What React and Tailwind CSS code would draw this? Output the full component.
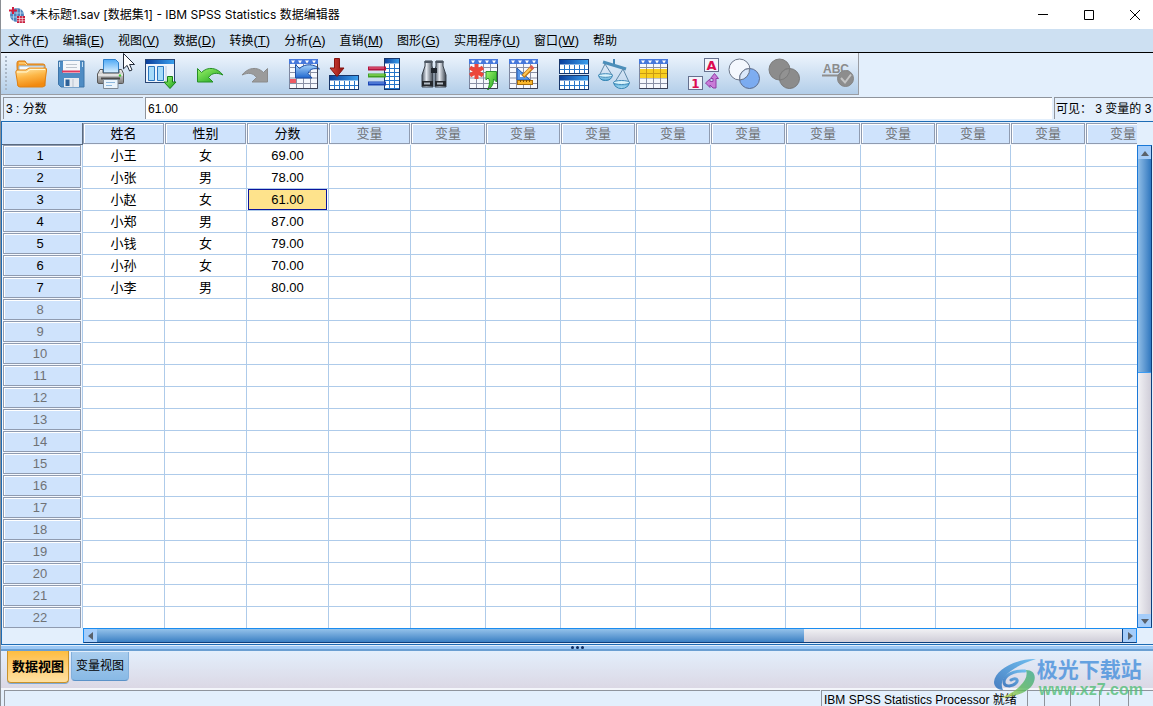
import { useState } from 'react'

const menus = [
  ['文件', 'F'],
  ['编辑', 'E'],
  ['视图', 'V'],
  ['数据', 'D'],
  ['转换', 'T'],
  ['分析', 'A'],
  ['直销', 'M'],
  ['图形', 'G'],
  ['实用程序', 'U'],
  ['窗口', 'W'],
  ['帮助', ''],
]

const records = [
  ['小王', '女', '69.00'],
  ['小张', '男', '78.00'],
  ['小赵', '女', '61.00'],
  ['小郑', '男', '87.00'],
  ['小钱', '女', '79.00'],
  ['小孙', '女', '70.00'],
  ['小李', '男', '80.00'],
]

const columns = ['姓名', '性别', '分数', ...Array(11).fill('变量')]
const rowNumbers = Array.from({ length: 22 }, (_, i) => i)

function Svg({ children }) {
  return (
    <svg viewBox="0 0 32 32" className="h-8 w-8" aria-hidden="true">
      {children}
    </svg>
  )
}

// white sheet with a blue header strip, base of several icons
function Sheet({ children }) {
  return (
    <Svg>
      <rect x="1.5" y="1.5" width="28" height="29" fill="#f6f8fd" stroke="#7c86a0" />
      <path d="M1.5 9.5h28M1.5 14.5h28M1.5 20h28M1.5 25.5h28M8.5 6v24M15.5 6v24M22.5 6v24" stroke="#8a90a5" fill="none" />
      <rect x="1" y="1" width="29" height="5" fill="#4678dc" />
      <path d="M3 2.5h4l-2 3zM10 2.5h4l-2 3zM17 2.5h4l-2 3zM24 2.5h4l-2 3z" fill="#fff" />
      {children}
      <path d="M29.5 6v24.5h-28" fill="none" stroke="#3a4055" />
    </Svg>
  )
}

function SmallTable({ x, y, w, h, head }) {
  const lines = []
  for (let i = x + 5; i < x + w - 2; i += 5) lines.push(`M${i + 0.5} ${y + head}V${y + h}`)
  for (let j = y + head + 4; j < y + h - 1; j += 4) lines.push(`M${x} ${j + 0.5}H${x + w}`)
  return (
    <g>
      <rect x={x + 0.5} y={y + 0.5} width={w - 1} height={h - 1} fill="#fff" />
      <path d={lines.join('')} stroke="#2675c9" fill="none" />
      <rect x={x + 0.5} y={y + 0.5} width={w - 1} height={head - 1} fill="url(#headBlue)" />
      <rect x={x + 0.5} y={y + 0.5} width={w - 1} height={h - 1} fill="none" stroke="#17366a" />
    </g>
  )
}

function Gradients() {
  return (
    <svg width="0" height="0" className="absolute" aria-hidden="true">
      <defs>
        <linearGradient id="folder" x1="0" y1="0" x2="0.3" y2="1">
          <stop offset="0" stopColor="#fff0b8" />
          <stop offset="0.5" stopColor="#fdb849" />
          <stop offset="1" stopColor="#f28a10" />
        </linearGradient>
        <linearGradient id="headBlue" x1="0" y1="0" x2="1" y2="0">
          <stop offset="0" stopColor="#0a3f9c" />
          <stop offset="1" stopColor="#3ba0ee" />
        </linearGradient>
        <linearGradient id="metal" x1="0" y1="0" x2="1" y2="0">
          <stop offset="0" stopColor="#4c5663" />
          <stop offset="0.4" stopColor="#e6ebf2" />
          <stop offset="1" stopColor="#3b444f" />
        </linearGradient>
        <linearGradient id="body" x1="0" y1="0" x2="0" y2="1">
          <stop offset="0" stopColor="#f2f2f2" />
          <stop offset="1" stopColor="#7d7d7d" />
        </linearGradient>
        <linearGradient id="paper" x1="0" y1="0" x2="0" y2="1">
          <stop offset="0" stopColor="#4fa9f5" />
          <stop offset="1" stopColor="#dff2ff" />
        </linearGradient>
        <linearGradient id="green" x1="0" y1="0" x2="1" y2="1">
          <stop offset="0" stopColor="#9df46b" />
          <stop offset="1" stopColor="#18a01c" />
        </linearGradient>
        <linearGradient id="blueArrow" x1="0" y1="0" x2="0" y2="1">
          <stop offset="0" stopColor="#a8d4fb" />
          <stop offset="1" stopColor="#1f67cf" />
        </linearGradient>
        <linearGradient id="red" x1="0" y1="0" x2="1" y2="0">
          <stop offset="0" stopColor="#d9463c" />
          <stop offset="1" stopColor="#8c100e" />
        </linearGradient>
        <linearGradient id="pan" x1="0" y1="0" x2="0" y2="1">
          <stop offset="0" stopColor="#d8f1fb" />
          <stop offset="0.5" stopColor="#2d93cc" />
          <stop offset="1" stopColor="#b7e4f7" />
        </linearGradient>
        <linearGradient id="swirlBlue" x1="0" y1="1" x2="1" y2="0">
          <stop offset="0" stopColor="#2468b8" />
          <stop offset="1" stopColor="#55b4ee" />
        </linearGradient>
        <linearGradient id="swirlGreen" x1="0" y1="1" x2="1" y2="0">
          <stop offset="0" stopColor="#d5dc45" />
          <stop offset="0.5" stopColor="#58b85f" />
          <stop offset="1" stopColor="#3dab8c" />
        </linearGradient>
      </defs>
    </svg>
  )
}

const OpenIcon = () => (
  <Svg>
    <path d="M2 8V5q0-2 2-2h6l2 3h16q2 0 2 2v20H3z" fill="#f7a233" stroke="#d87a12" />
    <path d="M4 8h25v5H4z" fill="#f4faff" stroke="#8fb7dd" />
    <path d="M4 5h6l2 2" fill="none" stroke="#ffe7a0" />
    <path d="M.8 14q0-2 2-2H11l3-2h16q2 0 1.6 2L29.5 27q-.3 2-2 2H5q-2 0-2.200-2z" fill="url(#folder)" stroke="#e08214" />
    <path d="M2 14h10l3-2.500h15" fill="none" stroke="#fff7d2" />
  </Svg>
)

const SaveIcon = () => (
  <Svg>
    <path d="M3.500 3h25.500v26H6l-2.500-2.500z" fill="#4e8cc4" stroke="#3d74a8" />
    <path d="M8 3h17v12H8z" fill="#f5f7fa" />
    <path d="M11 6.500h11M11 9.500h11" stroke="#bcc4ce" />
    <path d="M7 13.500h18" stroke="#df3a60" strokeWidth="2" />
    <path d="M9 20h15v9H9z" fill="#e6eaf0" />
    <path d="M10.500 21.500h4V28h-4z" fill="#2f6298" />
    <path d="M18 21v8" stroke="#b9c2cf" />
    <path d="M4.500 4v5M27.500 4v5" stroke="#c7e0f5" />
  </Svg>
)

const PrintIcon = () => (
  <Svg>
    <path d="M8.500 1.500h12l3 3V15h-15z" fill="url(#paper)" stroke="#2c7fc9" />
    <path d="M5 11.500h3V15h16v-3.500h2.500l2 4v9q0 1-1 1H4q-1.500 0-1.500-1.500v-8z" fill="url(#body)" stroke="#595959" />
    <path d="M3 17h25" stroke="#fff" />
    <path d="M6 20.500h19" stroke="#4b4b4b" strokeWidth="2" />
    <circle cx="25" cy="17.500" r="1.200" fill="#41cc32" />
    <path d="M8.500 21.500h14.500v9H8.500z" fill="#eaf4fc" stroke="#7f8a96" />
    <path d="M11 24.500h9M11 27.500h6" stroke="#8db7dd" />
  </Svg>
)

const RecallIcon = () => (
  <Svg>
    <rect x=".5" y="1.500" width="29" height="23" fill="#eef4fc" stroke="#284574" />
    <rect x="1" y="2" width="28" height="4" fill="url(#headBlue)" />
    <path d="M3.500 8.500h6v14h-6zM12.500 8.500h6v14h-6z" fill="#a6dcfa" stroke="#2b77c0" />
    <path d="M21 8v15" stroke="#b8c8df" />
    <path d="M22.500 18.500h5V24h3.500l-6 6.500-6-6.500h3.500z" fill="url(#green)" stroke="#178018" />
  </Svg>
)

const UndoIcon = () => (
  <Svg>
    <path d="M2.500 10.500l4 4C13 8 22 9.500 28 17c-6-2.500-11-2.500-14.500 2.500l4.500 4.500H2.500z" fill="url(#green)" stroke="#268f26" />
  </Svg>
)

const RedoIcon = () => (
  <Svg>
    <path d="M29.500 10.500l-4 4C19 8 10 9.500 4 17c6-2.500 11-2.500 14.500 2.500L14 24h15.500z" fill="#9b9b9b" stroke="#8b8b8b" />
  </Svg>
)

const GotoCaseIcon = () => (
  <Sheet>
    <rect x="2" y="21" width="6" height="4" fill="#ee5a63" />
    <path d="M7.500 6.500l4 4C17 5 27 6 31.500 11c-7-1-9.500 0-11.500 4.500l4 4.500H7.500z" fill="url(#blueArrow)" stroke="#1d4fa5" />
  </Sheet>
)

const GotoVariableIcon = () => (
  <Svg>
    <SmallTable x={1} y={17} w={30} h={15} head={6} />
    <path d="M6.500.5h5V10h4.500l-7 8.500L2 10h4.500z" fill="url(#red)" stroke="#851411" />
  </Svg>
)

const VariablesIcon = () => (
  <Svg>
    <SmallTable x={16} y={0} w={16} h={32} head={6} />
    <path d="M0 10.500h18" stroke="#b0143c" strokeWidth="4" />
    <path d="M1 10h15" stroke="#f2708c" />
    <path d="M0 17.500h18" stroke="#3f9e22" strokeWidth="4" />
    <path d="M1 17h15" stroke="#a5ef73" />
    <path d="M0 25.500h18" stroke="#1b46b4" strokeWidth="4" />
    <path d="M1 25h15" stroke="#7ca6f5" />
  </Svg>
)

const FindIcon = () => (
  <Svg>
    <path d="M7 3h7v5l1 4v17H4V17l3-9z" fill="url(#metal)" stroke="#3a424c" />
    <path d="M18 3h7v5l3 9v12H17V12l1-4z" fill="url(#metal)" stroke="#3a424c" />
    <path d="M6.500 4h8M17.500 4h8" stroke="#4d5662" strokeWidth="2" />
    <rect x="13" y="10" width="6" height="5" fill="#20262e" />
    <path d="M4 23h11v5H4zM17 23h11v5H17z" fill="#23272c" />
    <path d="M6 25.500h6M19 25.500h6" stroke="#b3bbc4" strokeWidth="2" />
  </Svg>
)

const InsertCaseIcon = () => (
  <Sheet>
    <path d="M8.500 6v15M2 9.500l13 8M15 9.500l-13 8" stroke="#ec463c" strokeWidth="4" />
    <path d="M18 13.500h10.500V24l-3-3c0 5-1.500 8.500-6 11 2-4 2.500-8 1.500-11l-1-1-2 2z" fill="url(#green)" stroke="#2a962a" />
  </Sheet>
)

const InsertVariableIcon = () => (
  <Sheet>
    <path d="M9 10v12h13z" fill="#5696e8" stroke="#1e5bb5" />
    <path d="M12 16v3h3.500z" fill="#fff" />
    <path d="M15 18.500L24.500 9" stroke="#c27912" strokeWidth="4" />
    <path d="M15.500 17.500L23.500 9.500" stroke="#ffc95a" strokeWidth="2" />
    <path d="M22.500 10.500L25 8.500" stroke="#df5d52" strokeWidth="4" />
    <rect x="9.500" y="22.500" width="15" height="4" fill="#f9b62c" stroke="#a66a0a" />
    <path d="M12.500 22v2M15.500 22v2M18.500 22v2M21.500 22v2" stroke="#794b00" />
  </Sheet>
)

const SplitIcon = () => (
  <Svg>
    <SmallTable x={1} y={1} w={30} h={15} head={6} />
    <SmallTable x={1} y={17} w={30} h={15} head={6} />
  </Svg>
)

const WeightIcon = () => (
  <Svg>
    <path d="M16 1v6" stroke="#4186b5" strokeWidth="2" />
    <path d="M5 4l23 7" stroke="#4d8fba" strokeWidth="3" />
    <path d="M7 6L1.500 17M7 6l7 11M25 11l-8 13M25 11l6 13" stroke="#5e88a8" fill="none" />
    <path d="M.5 17h14q-1 5.500-7 5.500T.5 17zM15.500 24.500h16q-1.500 6-8 6t-8-6z" fill="url(#pan)" stroke="#2d80b0" />
    <ellipse cx="7.500" cy="17.500" rx="7" ry="1.800" fill="#d9f3fc" stroke="#418bb8" />
    <ellipse cx="23.500" cy="24.500" rx="8" ry="2" fill="#d9f3fc" stroke="#418bb8" />
  </Svg>
)

const SelectIcon = () => (
  <Sheet>
    <path d="M2 11h27v9H2z" fill="#f8cf21" />
    <path d="M8.500 11v9M15.500 11v9M22.500 11v9M2 15.500h27" stroke="#c99a14" />
  </Sheet>
)

const LabelsIcon = () => (
  <Svg>
    <rect x="16.500" y=".5" width="14" height="13" fill="#f2f4fb" stroke="#65708e" />
    <text x="23.500" y="11.500" textAnchor="middle" fontSize="13" fontWeight="bold" fontFamily="DejaVu Sans" fill="#dc0a50">A</text>
    <rect x=".5" y="18.500" width="14" height="13" fill="#f2f4fb" stroke="#65708e" />
    <text x="7.500" y="29.500" textAnchor="middle" fontSize="12" fontWeight="bold" fontFamily="DejaVu Sans" fill="#dc0a50">1</text>
    <path d="M26.500 15.500l4 5H28V30h-3l-3-3v2.500L17.500 25l4.500-4v2.500h3V20.500h-2.500z" fill="#c97bd8" stroke="#8f3fa5" />
  </Svg>
)

const SetsIcon = () => (
  <Svg>
    <circle cx="11.500" cy="11.500" r="10.500" fill="#f4f8fe" stroke="#6d7789" />
    <circle cx="21.500" cy="20.500" r="10" fill="#6fa3f0" fillOpacity=".85" stroke="#5b6b8c" />
    <path d="M21.500 10.500A10 10 0 0 0 11.700 22 10.500 10.500 0 0 0 21.500 10.500z" fill="#dae8fb" stroke="#6d7789" />
  </Svg>
)

const AllVariablesIcon = () => (
  <Svg>
    <circle cx="11.500" cy="11.500" r="10.500" fill="#8c8c8c" stroke="#7c7c7c" />
    <circle cx="21.500" cy="20.500" r="10" fill="#8c8c8c" stroke="#777" />
    <path d="M21.500 10.500A10 10 0 0 0 11.700 22 10.500 10.500 0 0 0 21.500 10.500z" fill="#929292" stroke="#7b7b7b" />
  </Svg>
)

const SpellIcon = () => (
  <Svg>
    <text x="14" y="15" textAnchor="middle" fontSize="12" fontWeight="bold" fontFamily="Liberation Sans" fill="#8b8b8b">ABC</text>
    <path d="M0 17.500h20" stroke="#8f8f8f" strokeWidth="2" />
    <circle cx="23.500" cy="20.500" r="8" fill="#8d8d8d" stroke="#858585" />
    <path d="M19 20l4 4.500 6-8" fill="none" stroke="#c4c4c4" strokeWidth="2" />
  </Svg>
)

const toolGroups = [
  [['打开', OpenIcon], ['保存', SaveIcon], ['打印', PrintIcon]],
  [['重新调用对话框', RecallIcon]],
  [['撤消', UndoIcon], ['重做', RedoIcon]],
  [['转到个案', GotoCaseIcon], ['转到变量', GotoVariableIcon], ['变量', VariablesIcon]],
  [['查找', FindIcon]],
  [['插入个案', InsertCaseIcon], ['插入变量', InsertVariableIcon]],
  [['拆分文件', SplitIcon], ['加权个案', WeightIcon], ['选择个案', SelectIcon]],
  [['值标签', LabelsIcon], ['使用变量集', SetsIcon], ['显示所有变量', AllVariablesIcon]],
  [['拼写检查', SpellIcon]],
]

function AppIcon() {
  return (
    <svg viewBox="0 0 16 16" className="h-4 w-4" aria-hidden="true">
      <circle cx="8" cy="8" r="7" fill="#4e83bd" />
      <path d="M1.500 6h13M1.500 10h13M8 1v14M4.500 2v12M11.500 2v12" stroke="#c7dff3" strokeWidth=".7" fill="none" />
      <path d="M4 0v7M0 3.500h8" stroke="#d31d3d" strokeWidth="2" />
      <path d="M8 9h8v7H8z" fill="#c81d3c" />
      <path d="M8 11.500h8M8 13.800h8M10.600 9v7M13.300 9v7" stroke="#fff" strokeWidth=".6" />
    </svg>
  )
}

function TitleBar() {
  return (
    <header className="flex h-[29px] shrink-0 items-center bg-white pl-2">
      <AppIcon />
      <h1 className="ml-[5px] flex-1 truncate font-[Inter,'Noto_Sans_CJK_SC',sans-serif] text-xs">
        *未标题1.sav [数据集1] - IBM SPSS Statistics 数据编辑器
      </h1>
      <div className="-mr-[5px] flex">
        <button aria-label="最小化" className="flex h-7 w-[46px] items-center justify-center">
          <svg width="10" height="10"><path d="M0 4.500h10" stroke="#000" /></svg>
        </button>
        <button aria-label="最大化" className="flex h-7 w-[46px] items-center justify-center">
          <svg width="10" height="10"><path d="M.5.5h9v9h-9z" stroke="#000" fill="none" /></svg>
        </button>
        <button aria-label="关闭" className="flex h-7 w-[46px] items-center justify-center">
          <svg width="10" height="10"><path d="M0 0l10 10M10 0L0 10" stroke="#000" /></svg>
        </button>
      </div>
    </header>
  )
}

function Toolbar() {
  return (
    <div className="flex h-[42px] shrink-0">
      <div className="flex items-center gap-[10px] border-r border-b border-[#9a9da3] bg-linear-to-b from-[#eef5fd] to-[#b3cee9]">
        <div className="-mr-[6px] ml-1 h-9 w-[2px] bg-[repeating-linear-gradient(#aab7c6_0_2px,transparent_2px_4px)]" />
        {toolGroups.map((group, i) => (
          <div key={i} className={i === 2 ? 'flex gap-[3px]' : 'flex last:ml-1'}>
            {group.map(([label, Icon]) => (
              <button key={label} aria-label={label} className="flex h-10 w-10 items-center justify-center">
                <Icon />
              </button>
            ))}
          </div>
        ))}
      </div>
    </div>
  )
}

function DataTable({ selected, onSelect }) {
  return (
    <table className="w-max table-fixed border-separate border-spacing-0 text-center text-[13px]">
      <colgroup>
        <col className="w-[81px]" />
        {columns.map((_, i) => (
          <col key={i} className={i < 4 ? 'w-[82px]' : 'w-[75px]'} />
        ))}
      </colgroup>
      <thead>
        <tr>
          <th className="h-[22px] border-r border-b border-[#5b6b80] bg-[#cfe3fc] p-0" />
          {columns.map((name, i) => (
            <th key={i} scope="col" className="bg-[#f4f8fe] p-0 font-normal">
              <div
                className={`mr-px mb-px h-[21px] border border-[#8f9bb0] bg-[#cfe3fc] leading-[20px] shadow-[inset_1px_1px_#fff] ${i < 3 ? 'text-black' : 'text-[#6f7276]'}`}
              >
                {name}
              </div>
            </th>
          ))}
        </tr>
      </thead>
      <tbody>
        {rowNumbers.map((r) => (
          <tr key={r}>
            <th scope="row" className="h-[22px] border-r border-[#aecbea] bg-[#f4f8fe] p-0 font-normal">
              <div
                className={`mr-px mb-px ml-px h-[21px] border border-[#8f9bb0] bg-[#cfe3fc] pr-1 leading-[20px] shadow-[inset_1px_1px_#fff] ${r < records.length ? 'text-black' : 'text-[#6f7276]'}`}
              >
                {r + 1}
              </div>
            </th>
            {columns.map((_, c) => {
              const active = selected[0] === r && selected[1] === c
              return (
                <td key={c} onClick={() => onSelect([r, c])} className="h-[22px] border-r border-b border-[#aecbea] bg-white p-0">
                  <div className={active ? 'mr-px ml-px h-[21px] border border-[#0a149c] bg-[#fee38c] leading-[19px]' : 'h-[21px] leading-[21px]'}>
                    {records[r]?.[c]}
                  </div>
                </td>
              )
            })}
          </tr>
        ))}
      </tbody>
    </table>
  )
}

const arrows = {
  up: 'M0 7l4-5 4 5z',
  down: 'M0 2h8L4 7z',
  left: 'M6 0v8L1 4z',
  right: 'M2 0l5 4-5 4z',
}

function ScrollButton({ dir, label }) {
  return (
    <button aria-label={label} className="flex h-[13px] w-[13px] shrink-0 items-center justify-center bg-[#a5cdfa]">
      <svg width="8" height="8"><path d={arrows[dir]} fill="#59616b" /></svg>
    </button>
  )
}

function Watermark() {
  return (
    <div className="pointer-events-none absolute right-[10px] bottom-[6px] flex items-center opacity-80">
      <svg viewBox="0 0 44 41" className="h-[41px] w-11" aria-hidden="true">
        <path d="M43 1C27 0 2 10 1 24c0 4 3 8 9 8C5 22 15 10 43 1z" fill="url(#swirlBlue)" />
        <path d="M32 13C20 12 11 18 11 24c0 5 8 5 12 1 3-3 0-6-5-3" fill="none" stroke="url(#swirlBlue)" strokeWidth="3" strokeLinecap="round" />
        <path d="M33 12c8 0 11 6 7 14C36 34 22 39 7 40c8-3 14-6 20-12 5-5 8-10 6-16z" fill="url(#swirlGreen)" />
      </svg>
      <div className="flex flex-col">
        <span className="font-['Noto_Sans_CJK_SC',sans-serif] text-[21px] leading-6 font-bold text-[#4790dc]">极光下载站</span>
        <span className="pl-[2px] text-base leading-5 font-bold text-[#55bf79]">www.xz7.com</span>
      </div>
    </div>
  )
}

export default function App() {
  const [selected, setSelected] = useState([2, 2])
  const [view, setView] = useState('data')
  const [row, col] = selected
  const value = records[row]?.[col] ?? ''

  const tabClass = (name) =>
    view === name
      ? 'h-8 rounded-b border border-t-0 border-[#c8922c] bg-linear-to-b from-[#fdbd3e] to-[#ffe0a0] px-1 pt-px text-[13px] font-bold shadow-[0_1px_#7fa9d6]'
      : 'mt-px h-[29px] rounded-b border border-t-0 border-[#83b0dc] border-b-[#5b92c8] bg-linear-to-b from-[#a9cdee] to-[#88b9e5] px-1'

  return (
    <div className="relative flex h-screen flex-col overflow-hidden border-l border-[#8b8f94] bg-[#e3effc] font-['Liberation_Sans','Noto_Sans_CJK_SC',sans-serif] text-xs text-black">
      <Gradients />
      <TitleBar />

      <nav className="flex h-6 shrink-0 items-center gap-[14px] border-b border-black bg-[#cde0f2] pt-px pl-[7px]">
        {menus.map(([label, key]) => (
          <button key={label} className="text-[13px] whitespace-nowrap">
            <span className="text-xs">{label}</span>
            {key && <>(<u>{key}</u>)</>}
          </button>
        ))}
      </nav>

      <Toolbar />

      <div className="flex shrink-0 gap-[2px] overflow-hidden pt-[2px] pb-[2px] pl-[2px]">
        <div className="h-[22px] w-[140px] shrink-0 border-t border-l border-[#8f949c] pl-[2px] leading-[22px]">
          {row + 1} : {columns[col]}
        </div>
        <input
          aria-label="单元格值"
          readOnly
          value={value}
          className="h-[22px] min-w-0 flex-1 border-t border-l border-[#8f949c] bg-white pl-[2px] outline-none"
        />
        <div className="h-[22px] w-[99px] shrink-0 border-t border-l border-[#8f949c] pl-px leading-[22px] whitespace-nowrap">
          可见：&nbsp;3 变量的 3
        </div>
      </div>

      <main className="flex min-h-0 flex-1 flex-col border-y border-l border-[#1d6cb5]">
        <div className="flex min-h-0 flex-1 pt-px">
          <div className="min-w-0 flex-1 overflow-hidden">
            <DataTable selected={selected} onSelect={setSelected} />
          </div>
          <div className="mt-[22px] mr-px flex w-[15px] flex-col border border-[#1a78d8] border-r-[#0d3f7c]">
            <ScrollButton dir="up" label="向上滚动" />
            <div className="flex-1 bg-linear-to-r from-[#f1f1f4] to-[#cfcdd8]">
              <div className="h-[47%] border-b border-[#3b9bf2] bg-linear-to-r from-[#8fbde6] to-[#2f78bf]" />
            </div>
            <ScrollButton dir="down" label="向下滚动" />
          </div>
        </div>
        <div className="mr-4 mb-px ml-[81px] flex h-[15px] shrink-0 border border-[#1a8cf0] border-b-[#0d3f7c]">
          <ScrollButton dir="left" label="向左滚动" />
          <div className="flex-1 border-r border-[#0d3f7c] bg-linear-to-b from-[#f1f1f4] to-[#cfcdd8]">
            <div className="h-full w-[69%] bg-linear-to-b from-[#94c2ea] to-[#3a80c3]" />
          </div>
          <ScrollButton dir="right" label="向右滚动" />
        </div>
      </main>

      <div className="mt-px flex h-[5px] shrink-0 items-center justify-center gap-[2px] border-b-2 border-[#6a9fd2] bg-[#9cc8f5]">
        <i className="h-[3px] w-[3px] rounded-full bg-[#0d2c60]" />
        <i className="h-[3px] w-[3px] rounded-full bg-[#0d2c60]" />
        <i className="h-[3px] w-[3px] rounded-full bg-[#0d2c60]" />
      </div>

      <div className="flex h-[39px] shrink-0 items-start gap-[2px] border-b-2 border-[#f4f6fb] bg-linear-to-b from-[#e3effc] to-[#dbd8e5] pl-[6px]">
        <button className={tabClass('data')} onClick={() => setView('data')}>数据视图</button>
        <button className={tabClass('variable')} onClick={() => setView('variable')}>变量视图</button>
      </div>

      <footer className="flex h-4 shrink-0 pl-[3px] leading-[18px] *:h-4 *:border-t *:border-l *:border-[#8f949c]">
        <div className="flex-1" />
        <div className="mx-px w-[205px] pl-[2px] whitespace-nowrap">IBM SPSS Statistics Processor 就绪</div>
        <div className="w-[17px]" />
        <div className="w-[26px]" />
        <div className="w-[29px]" />
        <div className="w-[29px]" />
        <div className="w-[25px]" />
      </footer>

      <Watermark />

      {/* mouse pointer */}
      <svg viewBox="0 0 12 19" className="pointer-events-none absolute top-[53px] left-[122px] h-[19px] w-3" aria-hidden="true">
        <path d="M.5.5v15.300l3.600-3.400 2.500 5.600 2.400-1-2.400-5.500h4.900z" fill="#fff" stroke="#222b3a" />
      </svg>
    </div>
  )
}
